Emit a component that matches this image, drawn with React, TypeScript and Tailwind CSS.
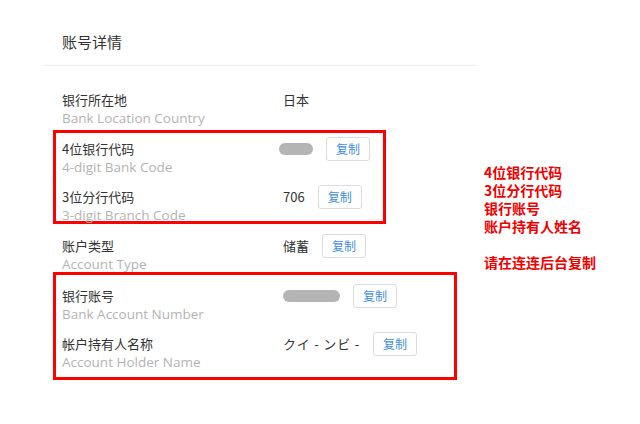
import React from 'react';

const CJK = '"Noto Sans CJK SC", "Noto Sans", sans-serif';
const LATIN = '"Open Sans", "Noto Sans CJK SC", sans-serif';

type Row = {
  label: string;
  sub: string;
  value?: string;
  mask?: number;
  wide?: boolean;
  copy?: boolean;
};

function CopyButton() {
  return (
    <button
      className="ml-[13px] h-[24px] w-[44px] shrink-0 rounded-[3px] border border-[#dcdcdc] bg-white text-[12px] text-[#3d8fdc]"
      style={{ fontFamily: CJK }}
    >
      复制
    </button>
  );
}

function DetailRow({ row }: { row: Row }) {
  return (
    <div>
      <div className="flex h-[19px] items-center">
        <div className="w-[221px] shrink-0 text-[13px] text-[#333]" style={{ fontFamily: CJK }}>
          {row.label}
        </div>
        {row.mask ? (
          <div
            className={`h-[12px] rounded-full bg-[#b4b4b4] ${row.mask < 40 ? '-ml-[4px]' : ''}`}
            style={{ width: row.mask }}
          />
        ) : (
          <div
            className={`text-[13px] text-[#333] ${row.wide ? 'tracking-[0.8px]' : ''}`}
            style={{ fontFamily: CJK }}
          >
            {row.value}
          </div>
        )}
        {row.copy && <CopyButton />}
      </div>
      <div className="h-[19px] text-[13.5px] leading-[19px] text-[#b3b3b3]" style={{ fontFamily: LATIN }}>
        {row.sub}
      </div>
    </div>
  );
}

export default function App() {
  return (
    <div className="flex h-[424px] w-[640px] bg-white">
      <div className="ml-[44px] w-[432px]">
        <div className="h-[20px] mt-[32px] pl-[18px] text-[15px] leading-[20px] text-[#333]" style={{ fontFamily: CJK }}>
          账号详情
        </div>
        <div className="mt-[13px] border-t border-[#eeeeee]" />

        <div className="mt-[24px] pl-[18px]">
          <DetailRow row={{ label: '银行所在地', sub: 'Bank Location Country', value: '日本' }} />
        </div>

        <div className="mt-[2px] ml-[9px] h-[94px] w-[333px] border-[3px] border-[#ff0000] pl-[6px] pt-[6px]">
          <div className="flex flex-col gap-[10px]">
            <DetailRow row={{ label: '4位银行代码', sub: '4-digit Bank Code', mask: 34, copy: true }} />
            <DetailRow row={{ label: '3位分行代码', sub: '3-digit Branch Code', value: '706', copy: true }} />
          </div>
        </div>

        <div className="mt-[12px] pl-[18px]">
          <DetailRow row={{ label: '账户类型', sub: 'Account Type', value: '储蓄', copy: true }} />
        </div>

        <div className="-mt-[2px] ml-[9px] h-[108px] w-[404px] border-[3px] border-[#ff0000] pl-[6px] pt-[11px]">
          <div className="flex flex-col gap-[10px]">
            <DetailRow row={{ label: '银行账号', sub: 'Bank Account Number', mask: 57, copy: true }} />
            <DetailRow
              row={{ label: '帐户持有人名称', sub: 'Account Holder Name', value: 'クイ - ンビ -', wide: true, copy: true }}
            />
          </div>
        </div>
      </div>

      <div
        className="ml-[8px] pt-[163px] text-[14px] font-bold leading-[18px] text-[#f00000]"
        style={{ fontFamily: CJK }}
      >
        <div>4位银行代码</div>
        <div>3位分行代码</div>
        <div>银行账号</div>
        <div>账户持有人姓名</div>
        <div className="h-[18px]" />
        <div>请在连连后台复制</div>
      </div>
    </div>
  );
}
